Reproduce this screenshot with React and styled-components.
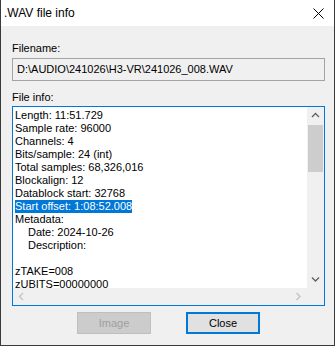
import React from "react";
import styled, { createGlobalStyle } from "styled-components";

const Global = createGlobalStyle`
  html, body { margin: 0; padding: 0; background: #ffffff; }
  body { font-family: "Liberation Sans", Arial, sans-serif; }
  * { box-sizing: border-box; }
`;

const Window = styled.div`
  width: 335px;
  height: 346px;
  display: flex;
  flex-direction: column;
  border: 1px solid #3a3a3a;
  border-top: none;
  background: #f0f0f0;
  overflow: hidden;
`;

const TitleBar = styled.div`
  height: 26px;
  flex: none;
  background: #ffffff;
  display: flex;
  align-items: center;
  justify-content: space-between;
  padding: 0 10px 0 3px;
  font-size: 12px;
  color: #000;
`;

const Content = styled.div`
  flex: 1;
  display: flex;
  flex-direction: column;
  padding: 16px 9px 0 11px;
  font-size: 11px;
  color: #000;
`;

const Label = styled.div`
  line-height: 13px;
  height: 13px;
  margin-bottom: ${(p) => p.$mb ?? 3}px;
`;

const ReadOnlyField = styled.div`
  height: 23px;
  border: 1px solid #a3a3a3;
  background: #f0f0f0;
  display: flex;
  align-items: center;
  padding-left: 4px;
  line-height: 13px;
  margin-bottom: 10px;
`;

const TextView = styled.div`
  height: 200px;
  border: 1px solid #0078d7;
  background: #ffffff;
  display: grid;
  grid-template-columns: 1fr 17px;
  grid-template-rows: 1fr 17px;
`;

const TextBody = styled.div`
  overflow: hidden;
  padding: 2px 0 0 2px;
`;

const Line = styled.div`
  height: 13px;
  line-height: 13px;
  white-space: pre;
  padding-left: ${(p) => (p.$indent ? 13 : 0)}px;
`;

const Selected = styled.span`
  background: #0078d7;
  color: #ffffff;
  display: inline-block;
  line-height: 13px;
`;

const VScroll = styled.div`
  background: #f0f0f0;
  display: flex;
  flex-direction: column;
`;

const HScroll = styled.div`
  background: #f0f0f0;
  display: flex;
  justify-content: space-between;
`;

const Corner = styled.div`
  background: #f0f0f0;
`;

const ArrowBox = styled.div`
  width: 17px;
  height: 17px;
  flex: none;
  display: flex;
  align-items: center;
  justify-content: center;
`;

const Track = styled.div`
  flex: 1;
  padding: 1px 1px 0 1px;
`;

const Thumb = styled.div`
  height: 47px;
  background: #cdcdcd;
`;

const Buttons = styled.div`
  display: flex;
  justify-content: center;
  gap: 35px;
  margin-top: 6px;
`;

const Button = styled.div`
  width: 74px;
  height: 22px;
  display: flex;
  align-items: center;
  justify-content: center;
  font-size: 11px;
  background: ${(p) => (p.$disabled ? "#cccccc" : "#e1e1e1")};
  color: ${(p) => (p.$disabled ? "#a0a0a0" : "#000")};
  border: ${(p) => (p.$default ? "2px solid #0078d7" : "1px solid #bfbfbf")};
`;

const Chevron = ({ dir, color }) => {
  const paths = {
    up: "M1 5 L4.5 1.5 L8 5",
    down: "M1 1.5 L4.5 5 L8 1.5",
    left: "M5 1 L1.5 4.5 L5 8",
    right: "M1.5 1 L5 4.5 L1.5 8",
  };
  const vert = dir === "up" || dir === "down";
  return (
    <svg width={vert ? 9 : 7} height={vert ? 7 : 9} viewBox={vert ? "0 0 9 7" : "0 0 7 9"}>
      <path d={paths[dir]} fill="none" stroke={color} strokeWidth="1.3" />
    </svg>
  );
};

const CloseIcon = () => (
  <svg width="11" height="11" viewBox="0 0 11 11">
    <path d="M0.5 0.5 L10.5 10.5 M10.5 0.5 L0.5 10.5" stroke="#000" strokeWidth="1" />
  </svg>
);

const lines = [
  { t: "Length: 11:51.729" },
  { t: "Sample rate: 96000" },
  { t: "Channels: 4" },
  { t: "Bits/sample: 24 (int)" },
  { t: "Total samples: 68,326,016" },
  { t: "Blockalign: 12" },
  { t: "Datablock start: 32768" },
  { t: "Start offset: 1:08:52.008", sel: true },
  { t: "Metadata:" },
  { t: "Date: 2024-10-26", indent: true },
  { t: "Description:", indent: true },
  { t: "" },
  { t: "zTAKE=008" },
  { t: "zUBITS=00000000" },
];

export default function App() {
  return (
    <>
      <Global />
      <Window>
        <TitleBar>
          <span>.WAV file info</span>
          <CloseIcon />
        </TitleBar>
        <Content>
          <Label $mb={3}>Filename:</Label>
          <ReadOnlyField>D:\AUDIO\241026\H3-VR\241026_008.WAV</ReadOnlyField>
          <Label $mb={2}>File info:</Label>
          <TextView>
            <TextBody>
              {lines.map((l, i) => (
                <Line key={i} $indent={l.indent}>
                  {l.sel ? <Selected>{l.t}</Selected> : l.t || " "}
                </Line>
              ))}
            </TextBody>
            <VScroll>
              <ArrowBox>
                <Chevron dir="up" color="#606060" />
              </ArrowBox>
              <Track>
                <Thumb />
              </Track>
              <ArrowBox>
                <Chevron dir="down" color="#606060" />
              </ArrowBox>
            </VScroll>
            <HScroll>
              <ArrowBox>
                <Chevron dir="left" color="#c2c2c2" />
              </ArrowBox>
              <ArrowBox>
                <Chevron dir="right" color="#c2c2c2" />
              </ArrowBox>
            </HScroll>
            <Corner />
          </TextView>
          <Buttons>
            <Button $disabled>Image</Button>
            <Button $default>Close</Button>
          </Buttons>
        </Content>
      </Window>
    </>
  );
}
